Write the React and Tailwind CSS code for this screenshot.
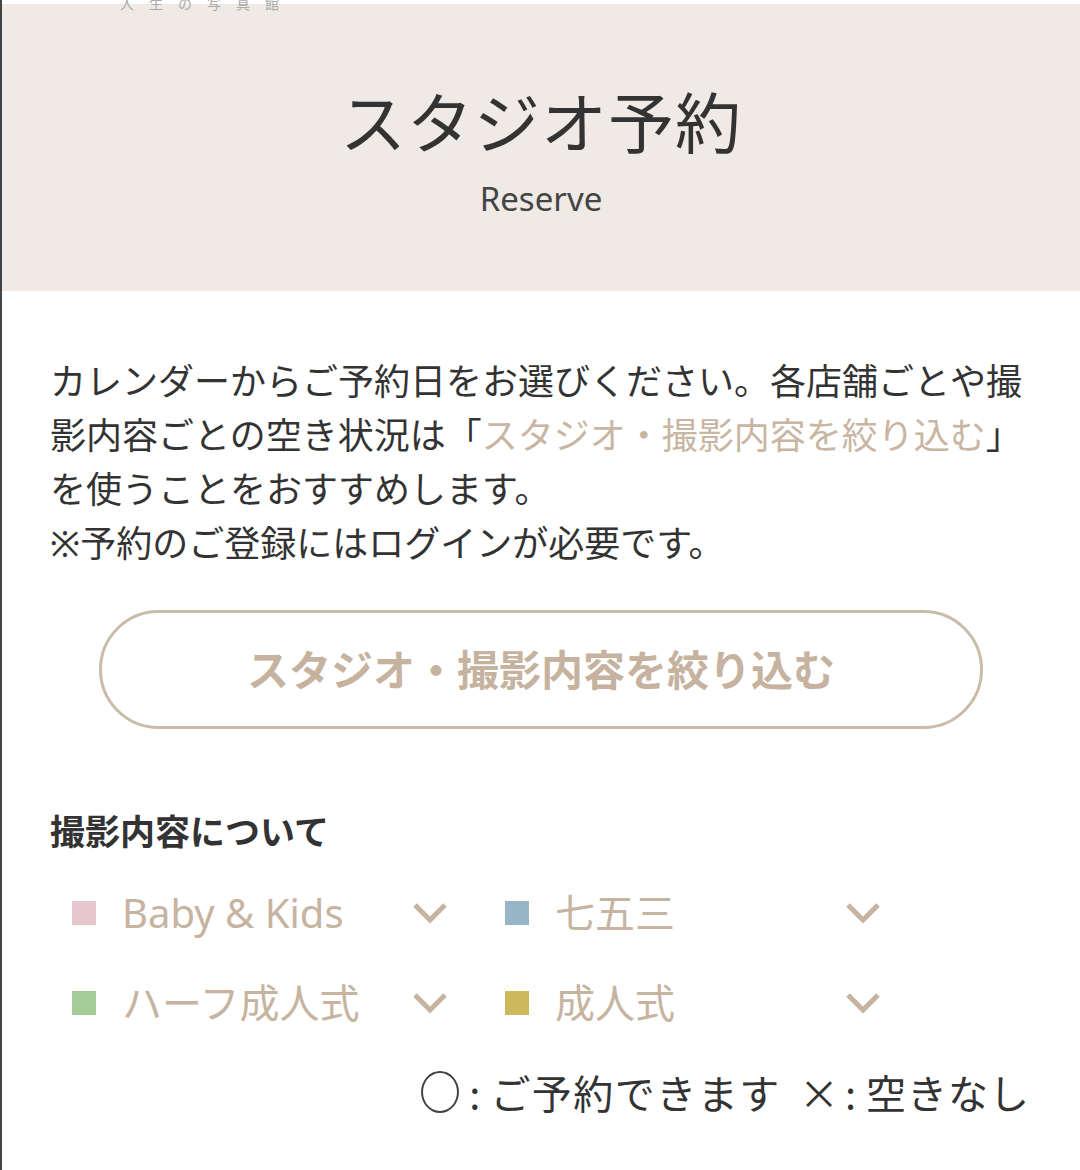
const categories = [
  { label: 'Baby & Kids', color: 'bg-[#e6c7cd]' },
  { label: '七五三', color: 'bg-[#98b4c7]' },
  { label: 'ハーフ成人式', color: 'bg-[#a5cb98]' },
  { label: '成人式', color: 'bg-[#ccb85d]' },
];

function Chevron() {
  return (
    <svg width="36" height="24" viewBox="0 0 36 24" className="shrink-0">
      <polyline points="3,4 18,19 33,4" fill="none" stroke="#c6b4a0" strokeWidth="5" />
    </svg>
  );
}

export default function App() {
  return (
    <div
      className="relative min-h-[1170px] w-[1080px] overflow-hidden border-l-2 border-[#444] bg-white text-[#333]"
      style={{ fontFamily: '"Noto Sans", "Noto Sans CJK JP", sans-serif' }}
    >
      <div className="absolute left-[118px] top-[-7px] text-[14px] tracking-[15px] text-[#aaa]">人生の写真館</div>

      <header className="mt-1 flex h-[287px] flex-col items-center bg-[#efeae6] pt-[70px]">
        <h1 className="text-[66px] leading-[96px] tracking-[1px]">スタジオ予約</h1>
        <p className="mt-[5px] text-[33px] leading-[48px] text-[#444]">Reserve</p>
      </header>

      <section className="px-[48px] pt-[64px]">
        <p className="text-[36px] leading-[54px]">
          カレンダーからご予約日をお選びください。各店舗ごとや撮影内容ごとの空き状況は「
          <span className="text-[#c8b6a2]">スタジオ・撮影内容を絞り込む</span>」を使うことをおすすめします。
          <br />
          ※予約のご登録にはログインが必要です。
        </p>

        <button className="mx-auto mt-[39px] flex h-[119px] w-[884px] items-center justify-center rounded-full border-[3px] border-[#cbbca9] bg-white text-[42px] font-bold text-[#c6b39f]">
          スタジオ・撮影内容を絞り込む
        </button>

        <h2 className="mt-[78px] text-[35px] font-bold leading-[50px]">撮影内容について</h2>

        <div className="mt-[29px] grid grid-cols-[376px_376px] gap-x-[57px] gap-y-[36px] pl-[22px]">
          {categories.map((c) => (
            <div key={c.label} className="flex h-[54px] items-center">
              <span className={`h-[24px] w-[24px] shrink-0 ${c.color}`} />
              <span className="ml-[26px] flex-1 whitespace-nowrap text-[40px] text-[#c6b4a0]">{c.label}</span>
              <Chevron />
            </div>
          ))}
        </div>

        <div
          className="mt-[34px] flex items-center justify-end pr-[2px] text-[40px] leading-[56px]"
          style={{ fontFamily: '"Noto Sans CJK JP", sans-serif' }}
        >
          <span className="inline-block h-[42px] w-[38px] rounded-[50%] border-2 border-[#444]" />
          <span className="ml-[10px]">:</span>
          <span className="ml-[10px] tracking-[1.5px]">ご予約できます</span>
          <span className="ml-[18px]">×</span>
          <span className="ml-[6px]">:</span>
          <span className="ml-[10px] tracking-[1px]">空きなし</span>
        </div>
      </section>
    </div>
  );
}
